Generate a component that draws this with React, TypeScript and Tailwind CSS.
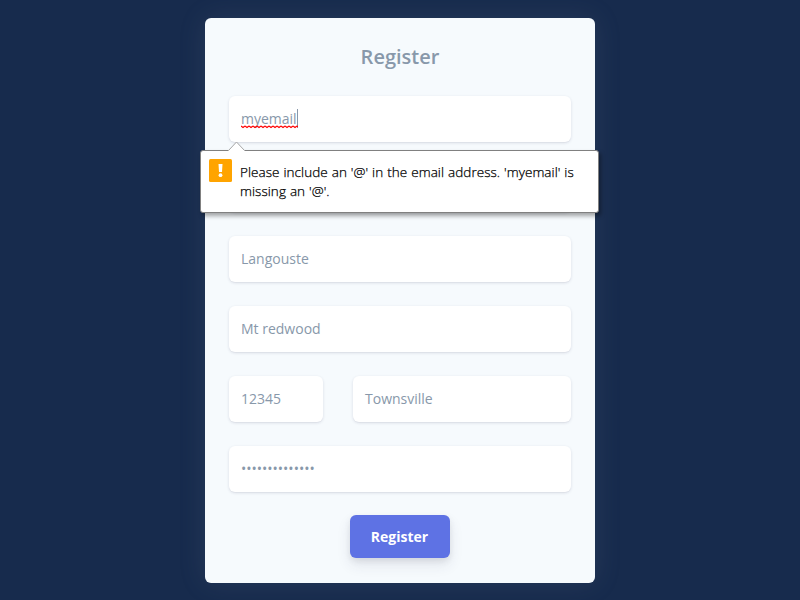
function Field({ value, className = "" }: { value: string; className?: string }) {
  return (
    <div className={`flex h-[46px] items-center rounded-[6px] bg-white px-3 pb-[2px] text-[14px] leading-[21px] text-[#8898aa] shadow-[0_1px_3px_rgba(50,50,93,0.15),0_1px_0_rgba(0,0,0,0.02)] ${className}`}>
      {value}
    </div>
  );
}

function Tooltip() {
  return (
    <div className="absolute left-[-5px] top-[132px] z-10 h-[63px] w-[399px]">
      <div className="flex h-full gap-[8px] rounded-[3px] border border-[#808080] bg-white pl-2 pt-2 shadow-[2px_3px_4px_rgba(0,0,0,0.35)]">
        <svg width="23" height="23" viewBox="0 0 23 23" className="shrink-0">
          <rect width="23" height="23" rx="1.5" fill="#ffa400" />
          <path d="M9.5 5H13.5L13 13H10Z" fill="#fff" />
          <circle cx="11.5" cy="16.2" r="1.9" fill="#fff" />
        </svg>
        <p className="whitespace-nowrap pt-[4px] font-['Open_Sans',sans-serif] text-[13.5px] font-light leading-[19px] tracking-[0.05px] text-black [-webkit-text-stroke:0.25px_black] [word-spacing:0.4px]">
          Please include an '@' in the email address. 'myemail' is<br />missing an '@'.
        </p>
      </div>
      <svg className="absolute left-[27px] top-[-9px]" width="20" height="11" viewBox="0 0 20 11">
        <path d="M1 10L9.5 1L18 10V11H1Z" fill="#fff" />
        <path d="M1.5 9.5L9.5 1L17.5 9.5" fill="none" stroke="#a5a5a5" />
      </svg>
    </div>
  );
}

export default function App() {
  return (
    <main className="flex h-[600px] w-[800px] justify-center overflow-hidden bg-[#172b4d] pt-[18px] font-['Open_Sans',sans-serif]">
      <section className="relative h-[565px] w-[390px] rounded-[6px] bg-[#f6fafd] px-6 shadow-[0_0_28px_rgba(136,152,170,0.14)]">
        <h1 className="pt-[24px] text-center text-[20px] font-semibold leading-[30px] text-[#8898aa]">Register</h1>
        <form className="mt-6 flex flex-col gap-6">
          <div className="flex h-[46px] items-center rounded-[6px] bg-white px-3 pb-[2px] text-[14px] leading-[21px] text-[#8898aa] shadow-[0_1px_3px_rgba(50,50,93,0.15),0_1px_0_rgba(0,0,0,0.02)]">
            <span className="relative">
              myemail
              <svg className="absolute left-0 top-[17px]" width="57" height="4">
                <defs>
                  <pattern id="wave" width="4" height="4" patternUnits="userSpaceOnUse">
                    <path d="M0 1L2 2.5L4 1" fill="none" stroke="#f00" strokeWidth="1.2" />
                  </pattern>
                </defs>
                <rect width="57" height="4" fill="url(#wave)" />
              </svg>
            </span>
            <span className="h-[19px] w-px bg-[#8898aa]" />
          </div>
          <Field value="" />
          <Field value="Langouste" />
          <Field value="Mt redwood" />
          <div className="flex gap-[30px]">
            <Field value="12345" className="w-[94px]" />
            <Field value="Townsville" className="flex-1" />
          </div>
          <Field value="••••••••••••••" />
          <button type="button" className="-mt-px h-[43px] w-[100px] self-center rounded-[6px] bg-[#5e72e4] pr-px text-[14px] font-bold text-white shadow-[0_7px_14px_rgba(50,50,93,0.1),0_3px_6px_rgba(0,0,0,0.08)]">
            Register
          </button>
        </form>
        <Tooltip />
      </section>
    </main>
  );
}
